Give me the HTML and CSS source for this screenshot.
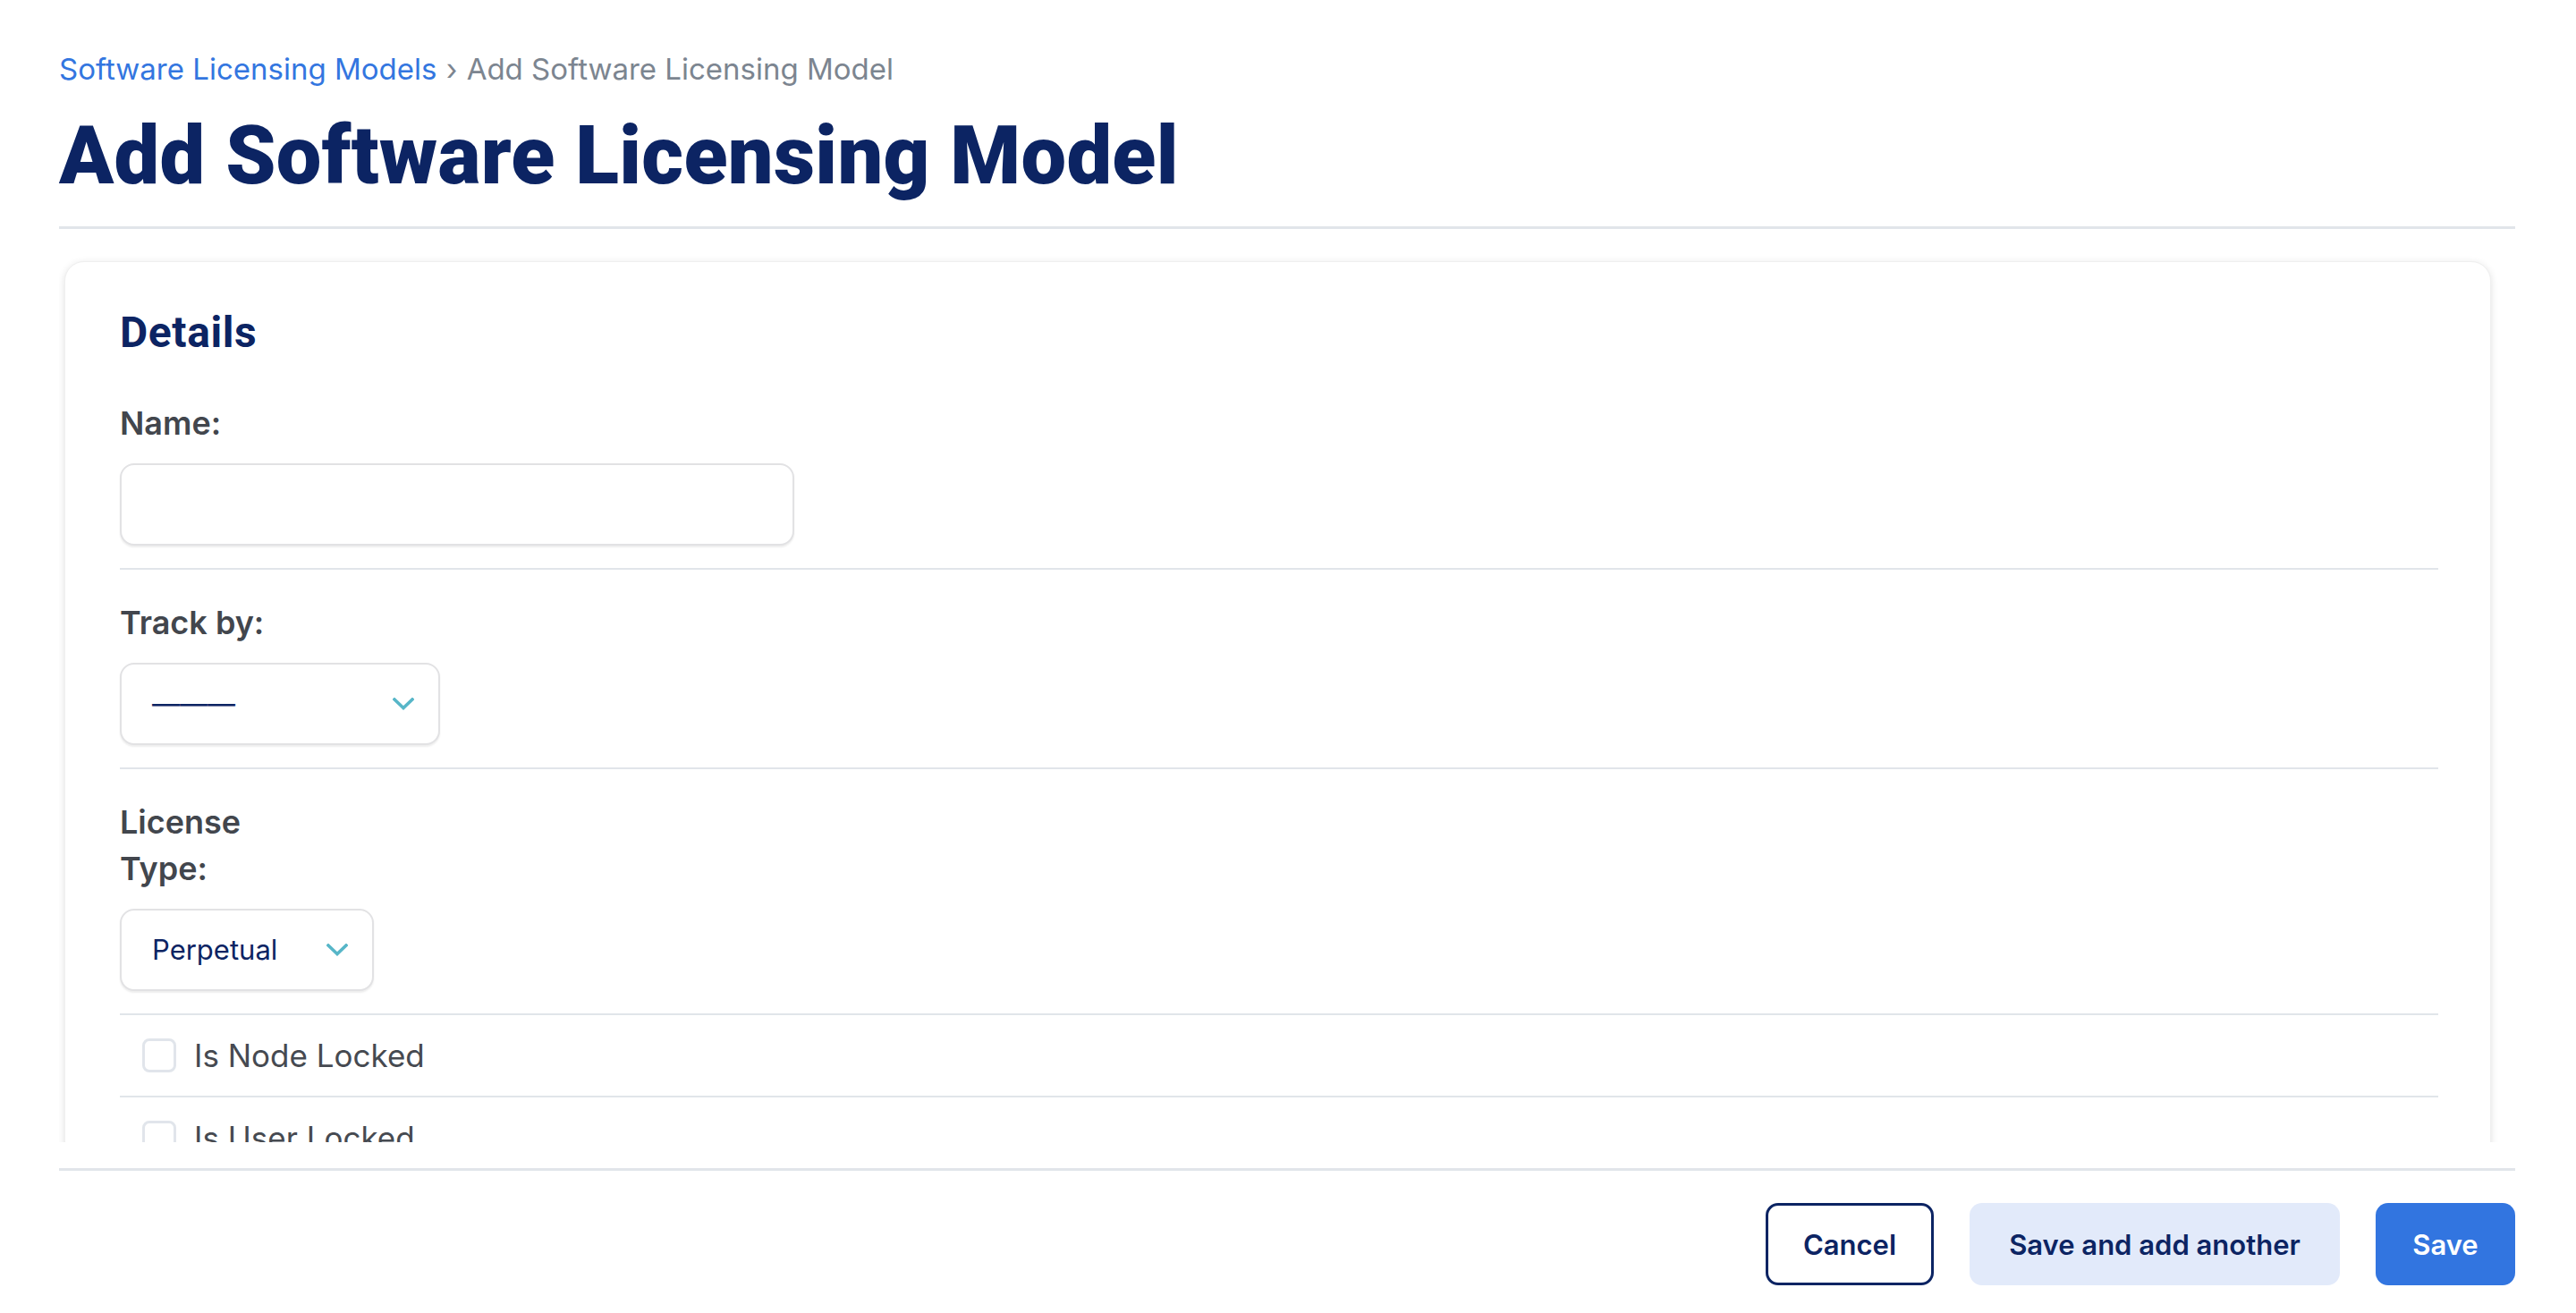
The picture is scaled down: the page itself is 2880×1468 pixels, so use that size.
FILE: index.html
```html
<!DOCTYPE html>
<html lang="en">
<head>
<meta charset="utf-8">
<title>Add Software Licensing Model</title>
<link rel="stylesheet" href="styles.css">
</head>
<body>
<div class="page">
  <nav class="breadcrumbs">
    <a class="crumb-link" href="#">Software Licensing Models</a>
    <span class="crumb-sep">›</span>
    <span class="crumb-current">Add Software Licensing Model</span>
  </nav>
  <h1 class="page-title">Add Software Licensing Model</h1>
  <hr class="rule rule--head">

  <div class="form-viewport">
    <section class="card">
      <h2 class="card-title">Details</h2>

      <div class="field-row">
        <label class="field-label" for="name">Name:</label>
        <input class="text-input" id="name" type="text">
      </div>

      <div class="field-row">
        <label class="field-label">Track by:</label>
        <div class="select select--track">
          <span class="select-value">———</span>
          <svg class="chevron" width="24" height="14" viewBox="0 0 24 14" aria-hidden="true"><polyline points="2,2 12,11.5 22,2" fill="none" stroke="#57b6c8" stroke-width="3.6" stroke-linecap="square"/></svg>
        </div>
      </div>

      <div class="field-row">
        <label class="field-label">License Type:</label>
        <div class="select select--type">
          <span class="select-value">Perpetual</span>
          <svg class="chevron" width="24" height="14" viewBox="0 0 24 14" aria-hidden="true"><polyline points="2,2 12,11.5 22,2" fill="none" stroke="#57b6c8" stroke-width="3.6" stroke-linecap="square"/></svg>
        </div>
      </div>

      <div class="check-row">
        <input class="checkbox" type="checkbox" id="node">
        <label class="check-label" for="node">Is Node Locked</label>
      </div>

      <div class="check-row">
        <input class="checkbox" type="checkbox" id="user">
        <label class="check-label" for="user">Is User Locked</label>
      </div>
    </section>
  </div>

  <hr class="rule rule--foot">
  <footer class="actions">
    <button class="btn btn--outline" type="button">Cancel</button>
    <button class="btn btn--soft" type="button">Save and add another</button>
    <button class="btn btn--primary" type="button">Save</button>
  </footer>
</div>
</body>
</html>
```

FILE: styles.css
```css
html, body {
  margin: 0;
  padding: 0;
  background: #ffffff;
}

body {
  font-family: "Inter", "Noto Sans", sans-serif;
  color: #43474e;
}

.page {
  padding: 55px 68px 0 66px;
}

.breadcrumbs {
  font-size: 33px;
  line-height: 44px;
  color: #7c8590;
  white-space: nowrap;
}

.crumb-link {
  color: #3376e0;
  text-decoration: none;
}

.crumb-sep {
  margin: 0 1px;
}

.page-title {
  margin: 23px 0 0;
  font-family: "Roboto", "Inter", sans-serif;
  font-weight: 900;
  font-size: 90px;
  line-height: 106px;
  color: #0c2463;
  letter-spacing: 0.3px;
}

.rule {
  border: 0;
  height: 3px;
  background: #e1e5ea;
  margin: 0;
}

.rule--head {
  margin-top: 25px;
}

.form-viewport {
  height: 1021px;
  overflow: hidden;
  padding: 36px 27px 0 6px;
  box-sizing: border-box;
}

.card {
  background: #ffffff;
  border-radius: 22px;
  border: 1px solid #efefef;
  box-shadow: 0 2px 8px rgba(0, 0, 0, 0.12);
  padding: 52px 58px 40px 61px;
}

.card-title {
  margin: 0 0 15px;
  font-family: "Roboto", "Inter", sans-serif;
  font-weight: 700;
  font-size: 48px;
  line-height: 54px;
  letter-spacing: 0.6px;
  color: #0c2463;
}

.field-row {
  padding: 33px 0 25px;
  border-bottom: 2px solid #e1e5ea;
  display: flex;
  flex-direction: column;
  align-items: flex-start;
  gap: 19px;
}

.field-label {
  font-size: 36px;
  line-height: 52px;
  font-weight: 600;
  color: #42464d;
  max-width: 210px;
}

.text-input {
  width: 754px;
  height: 92px;
  box-sizing: border-box;
  border: 2px solid #e2e2e4;
  border-radius: 16px;
  box-shadow: 0 2px 2px rgba(0, 0, 0, 0.07);
  background: #ffffff;
  font: inherit;
  font-size: 31px;
  padding: 0 34px;
  margin: 0;
  outline: none;
}

.select {
  height: 92px;
  box-sizing: border-box;
  border: 2px solid #e2e2e4;
  border-radius: 16px;
  box-shadow: 0 2px 2px rgba(0, 0, 0, 0.07);
  background: #ffffff;
  display: flex;
  align-items: center;
  justify-content: space-between;
  padding: 0 27px 0 34px;
}

.select--track {
  width: 358px;
}

.select--type {
  width: 284px;
}

.select-value {
  font-size: 31px;
  line-height: 40px;
  color: #0c2463;
  white-space: nowrap;
}

.chevron {
  display: block;
  flex: none;
}

.check-row {
  display: flex;
  align-items: center;
  gap: 20px;
  padding: 19px 0 19px 25px;
  border-bottom: 2px solid #e1e5ea;
}

.checkbox {
  appearance: none;
  -webkit-appearance: none;
  width: 38px;
  height: 38px;
  box-sizing: border-box;
  border: 3px solid #e1e5eb;
  border-radius: 8px;
  margin: 0;
  background: #ffffff;
  flex: none;
}

.check-label {
  font-size: 35px;
  line-height: 52px;
  color: #464a51;
}

.rule--foot {
  margin-top: 29px;
}

.actions {
  display: flex;
  justify-content: flex-end;
  gap: 40px;
  margin-top: 36px;
}

.btn {
  height: 92px;
  box-sizing: border-box;
  border-radius: 14px;
  font-family: "Inter", "Noto Sans", sans-serif;
  font-size: 31px;
  font-weight: 600;
  padding: 0;
  border: 0;
  cursor: pointer;
}

.btn--outline {
  background: #ffffff;
  color: #0c2463;
  border: 3px solid #0c2463;
  width: 188px;
}

.btn--soft {
  background: #e2eafa;
  color: #0c2463;
  width: 414px;
}

.btn--primary {
  background: #3275e0;
  color: #ffffff;
  width: 156px;
}
```
